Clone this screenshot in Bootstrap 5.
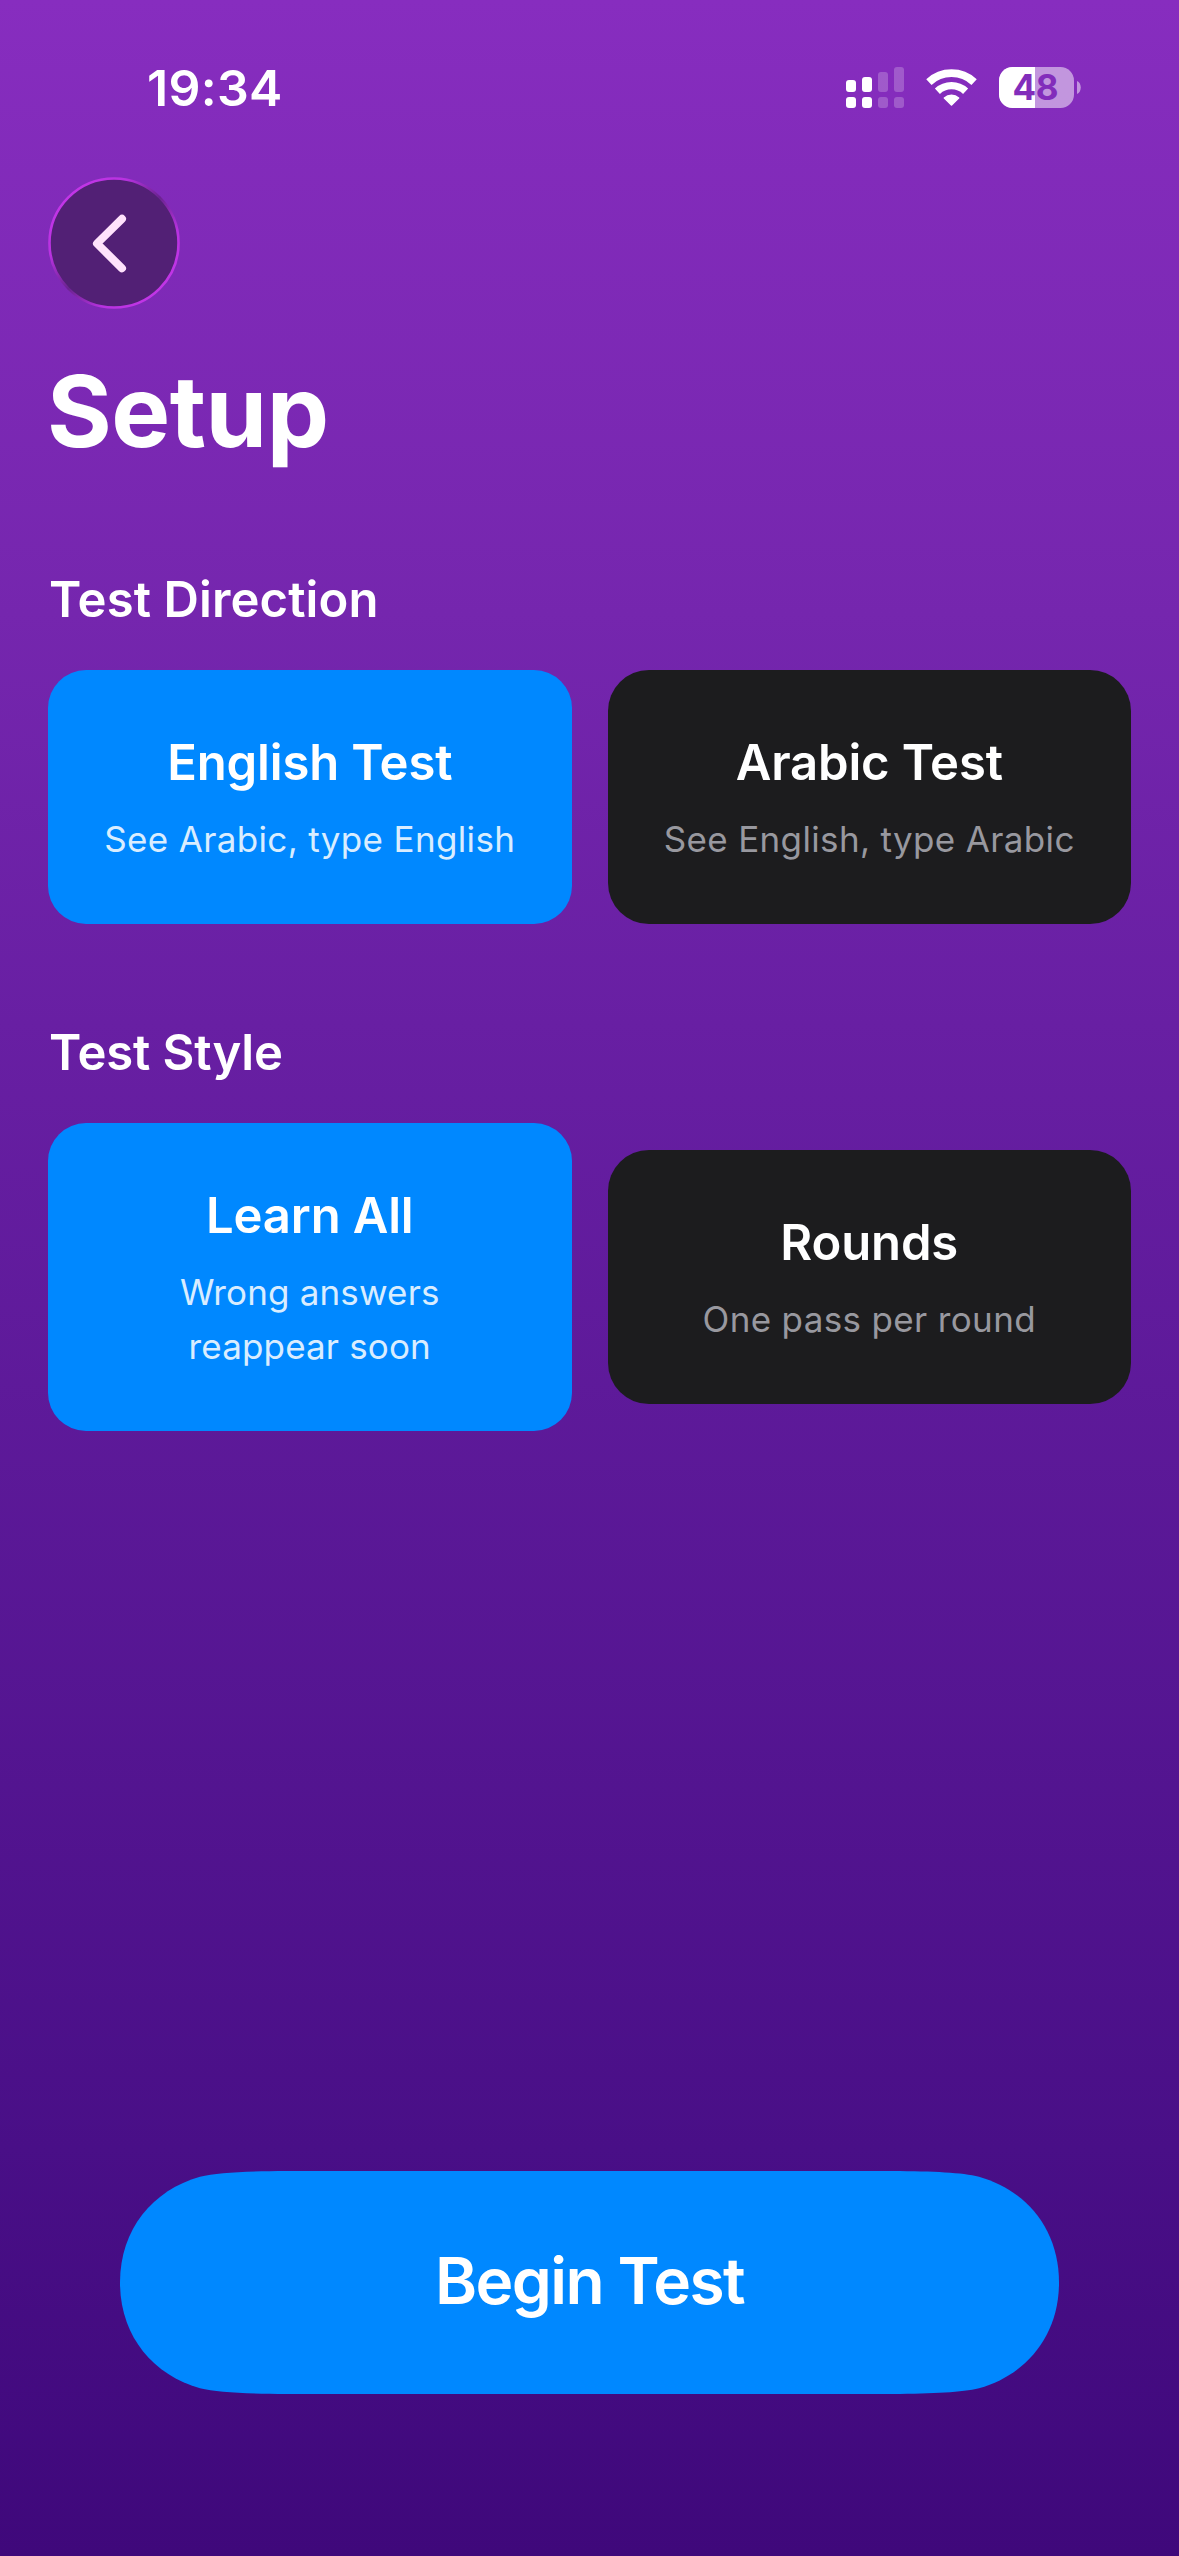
<!DOCTYPE html>
<html lang="en">
<head>
<meta charset="utf-8">
<meta name="viewport" content="width=device-width, initial-scale=1">
<title>Setup</title>
<link href="https://cdn.jsdelivr.net/npm/bootstrap@5.3.0/dist/css/bootstrap.min.css" rel="stylesheet">
<style>
  body {
    font-family: Inter, "Liberation Sans", sans-serif;
    font-kerning: normal;
    color: #fff;
    background: #3f087b;
  }
  .screen {
    height: 2556px;
    background: linear-gradient(180deg, #872dbf 0%, #7526ae 24%, #681fa3 40%, #490f87 84%, #3f087b 100%);
  }
  .status-row { height: 60px; margin-top: 58px; padding: 0 98px 0 147px; }
  .status-icons { gap: 22px; padding-bottom: 1px; }
  .clock { font-size: 50px; line-height: 60px; font-weight: 600; letter-spacing: .3px; }
  .content { padding: 0 48px; }
  .back-btn { width: 132px; height: 132px; margin-top: 59px; }
  .screen-title { font-size: 99px; line-height: 120px; font-weight: 700; letter-spacing: -.5px; margin: 42px 0 0 -1px; }
  .section-title { font-size: 49px; line-height: 60px; font-weight: 600; letter-spacing: .1px; margin: 99px 0 40px 1px; }
  .options + .section-title { letter-spacing: -.12px; }
  .options { gap: 36px; }
  .option {
    flex: 1 1 0;
    padding: 63px 40px 58px;
    border: 0;
    border-radius: 41px;
    background: #1c1c1e;
    color: #fff;
    text-align: center;
  }
  .option.selected { background: #08f; border-radius: 38px; }
  .option-name { font-size: 49px; line-height: 60px; font-weight: 600; letter-spacing: -.15px; }
  .option-note { margin-top: 19px; font-size: 35px; line-height: 54px; letter-spacing: .35px; color: #98989f; }
  .option-note.two-line { letter-spacing: .15px; }
  .selected .option-note { color: #d9edff; }
  .begin-btn {
    height: 223px;
    margin: 0 120px 162px;
    padding: 0 0 4px;
    border: 0;
    border-radius: 0;
    background: #08f;
    color: #fff;
    font-size: 64px;
    font-weight: 600;
    letter-spacing: -1.6px;
    clip-path: path("M167 0C125 .3 97 1.5 80 5.7C33 19 0 58 0 111.5S33 204 80 217.3C97 221.5 125 222.7 167 223H772C814 222.7 842 221.5 859 217.3C906 204 939 165 939 111.5S906 19 859 5.7C842 1.5 814 .3 772 0Z");
  }
</style>
</head>
<body>
<div class="screen d-flex flex-column overflow-hidden">
  <div class="status-row d-flex align-items-center justify-content-between flex-shrink-0">
    <div class="clock">19:34</div>
    <div class="status-icons d-flex align-items-center">
      <svg width="58" height="41" viewBox="0 0 58 41" fill="#fff" aria-hidden="true">
        <rect y="13" width="10" height="12" rx="3"/>
        <rect x="16" y="10" width="10" height="15" rx="3"/>
        <rect y="30" width="10" height="11" rx="3"/>
        <rect x="16" y="30" width="10" height="11" rx="3"/>
        <g opacity=".22">
          <rect x="32" y="5" width="10" height="20" rx="3"/>
          <rect x="48" y="0" width="10" height="25" rx="3"/>
          <rect x="32" y="30" width="10" height="11" rx="3"/>
          <rect x="48" y="30" width="10" height="11" rx="3"/>
        </g>
      </svg>
      <svg width="51" height="41" viewBox="0 0 51 41" fill="none" stroke="#fff" aria-hidden="true">
        <path d="M2.9 15.1A33.2 33.2 0 0 1 48.1 15.1" stroke-width="7.8"/>
        <path d="M11.4 24.2A20.7 20.7 0 0 1 39.6 24.2" stroke-width="7.4"/>
        <path d="M25.5 38L18.4 31A10.5 10.5 0 0 1 32.6 31Z" fill="#fff" stroke-width="1.6" stroke-linejoin="round"/>
      </svg>
      <svg width="82" height="41" viewBox="0 0 82 41" aria-label="Battery 48 percent">
        <clipPath id="cell"><rect width="75" height="41" rx="13.5"/></clipPath>
        <g clip-path="url(#cell)">
          <rect width="75" height="41" fill="#fff" fill-opacity=".5"/>
          <rect width="36" height="41" fill="#fff"/>
        </g>
        <path d="M78 14C83 16 83 25 78 27Z" fill="#fff" fill-opacity=".5"/>
        <text x="13.5" y="33" font-family="Inter, sans-serif" font-size="35" font-weight="700" letter-spacing="-.5" fill="#822dbb">48</text>
      </svg>
    </div>
  </div>

  <main class="content">
    <button type="button" class="back-btn btn p-0 border-0 d-block" aria-label="Back">
      <svg class="d-block" width="132" height="132" viewBox="0 0 132 132" fill="none">
        <defs>
          <linearGradient id="rim" x1="0" y1="0" x2="1" y2="1">
            <stop offset=".1" stop-color="#c436e8"/>
            <stop offset=".3" stop-color="#b832e0"/>
            <stop offset=".5" stop-color="#6a2390"/>
            <stop offset=".7" stop-color="#b832e0"/>
            <stop offset=".9" stop-color="#c436e8"/>
          </linearGradient>
        </defs>
        <circle cx="66" cy="66" r="64.5" fill="#522075" stroke="url(#rim)" stroke-width="2.6"/>
        <path d="M74 41.8L49 66.5L74 91.3" stroke="#ffe2fc" stroke-width="8" stroke-linecap="round" stroke-linejoin="round"/>
      </svg>
    </button>

    <h1 class="screen-title">Setup</h1>

    <h2 class="section-title">Test Direction</h2>
    <div class="options d-flex align-items-center">
      <button type="button" class="option selected">
        <div class="option-name">English Test</div>
        <div class="option-note">See Arabic, type English</div>
      </button>
      <button type="button" class="option">
        <div class="option-name">Arabic Test</div>
        <div class="option-note">See English, type Arabic</div>
      </button>
    </div>

    <h2 class="section-title">Test Style</h2>
    <div class="options d-flex align-items-center">
      <button type="button" class="option selected">
        <div class="option-name">Learn All</div>
        <div class="option-note two-line">Wrong answers<br>reappear soon</div>
      </button>
      <button type="button" class="option">
        <div class="option-name">Rounds</div>
        <div class="option-note">One pass per round</div>
      </button>
    </div>
  </main>

  <button type="button" class="begin-btn btn mt-auto flex-shrink-0">Begin Test</button>
</div>
<script src="https://cdn.jsdelivr.net/npm/bootstrap@5.3.0/dist/js/bootstrap.bundle.min.js"></script>
</body>
</html>
